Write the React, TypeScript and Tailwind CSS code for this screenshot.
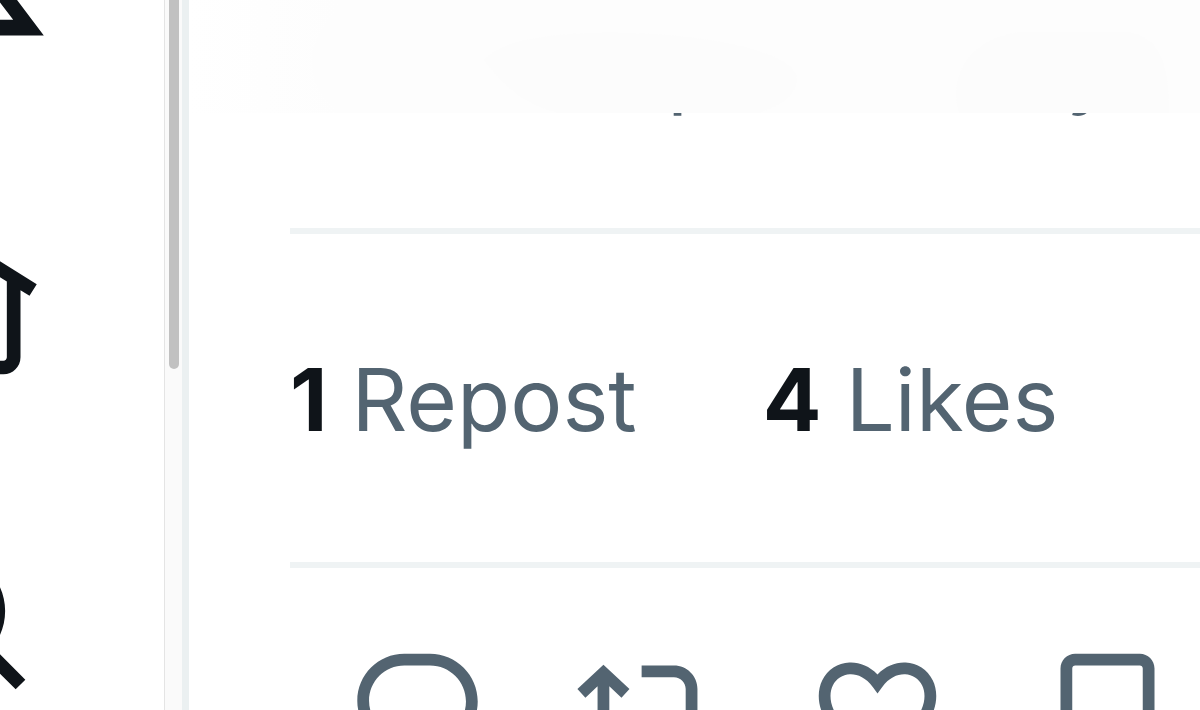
import type { ReactNode } from "react";

const NAV = [
  {
    id: "logo",
    label: "X",
    size: "size-[188px]",
    spacing: "mb-[171px]",
    path: "M18.244 2.25h3.308l-7.227 8.26 8.502 11.24H16.17l-5.214-6.817L4.99 21.75H1.68l7.73-8.835L1.254 2.25H8.08l4.713 6.231zm-1.161 17.52h1.833L7.084 4.126H5.117z",
  },
  {
    id: "home",
    label: "Home",
    size: "size-[164px]",
    spacing: "mb-[153px]",
    path: "M12 1.696L.622 8.807l1.06 1.696L3 9.679V19.5C3 20.881 4.119 22 5.5 22h13c1.381 0 2.5-1.119 2.5-2.5V9.679l1.318.824 1.06-1.696L12 1.696zM19 8.429V19.5c0 .276-.224.5-.5.5h-13c-.276 0-.5-.224-.5-.5V8.429l7-4.375 7 4.375z",
  },
  {
    id: "explore",
    label: "Explore",
    size: "size-[164px]",
    spacing: "",
    path: "M10.25 3.75c-3.59 0-6.5 2.91-6.5 6.5s2.91 6.5 6.5 6.5c1.795 0 3.419-.726 4.596-1.904 1.178-1.177 1.904-2.801 1.904-4.596 0-3.59-2.91-6.5-6.5-6.5zm-8.5 6.5c0-4.694 3.806-8.5 8.5-8.5s8.5 3.806 8.5 8.5c0 1.986-.682 3.815-1.824 5.262l4.781 4.781-1.414 1.414-4.781-4.781c-1.447 1.142-3.276 1.824-5.262 1.824-4.694 0-8.5-3.806-8.5-8.5z",
  },
];

const STATS = [
  { count: 1, label: "Repost" },
  { count: 4, label: "Likes" },
];

const ACTIONS = [
  {
    label: "Reply",
    path: "M1.751 10c0-4.42 3.584-8 8.005-8h4.366c4.49 0 8.129 3.64 8.129 8.13 0 2.96-1.607 5.68-4.196 7.11l-8.054 4.46v-3.69h-.067c-4.49.1-8.183-3.51-8.183-8.01zm8.005-6c-3.317 0-6.005 2.69-6.005 6 0 3.37 2.77 6.08 6.138 6.01l.351-.01h1.761v2.3l5.087-2.81c1.951-1.08 3.163-3.13 3.163-5.36 0-3.39-2.744-6.13-6.129-6.13H9.756z",
  },
  {
    label: "Repost",
    path: "M4.5 3.88l4.432 4.14-1.364 1.46L5.5 7.55V16c0 1.1.896 2 2 2H13v2H7.5c-2.209 0-4-1.79-4-4V7.55L1.432 9.48.068 8.02 4.5 3.88zM16.5 6H11V4h5.5c2.209 0 4 1.79 4 4v8.45l2.068-1.93 1.364 1.46-4.432 4.14-4.432-4.14 1.364-1.46 2.068 1.93V8c0-1.1-.896-2-2-2z",
  },
  {
    label: "Like",
    path: "M16.697 5.5c-1.222-.06-2.679.51-3.89 2.16l-.805 1.09-.806-1.09C9.984 6.01 8.526 5.44 7.304 5.5c-1.243.07-2.349.78-2.91 1.91-.552 1.12-.633 2.78.479 4.82 1.074 1.97 3.257 4.27 7.129 6.61 3.87-2.34 6.052-4.64 7.126-6.61 1.111-2.04 1.03-3.7.477-4.82-.561-1.13-1.666-1.84-2.908-1.91zm4.187 7.69c-1.351 2.48-4.001 5.12-8.379 7.67l-.503.3-.504-.3c-4.379-2.55-7.029-5.19-8.382-7.67-1.36-2.5-1.41-4.86-.514-6.67.887-1.79 2.647-2.91 4.601-3.01 1.651-.09 3.368.56 4.798 2.01 1.429-1.45 3.146-2.1 4.796-2.01 1.954.1 3.714 1.22 4.601 3.01.896 1.81.846 4.17-.514 6.67z",
  },
  {
    label: "Bookmark",
    path: "M4 4.5C4 3.12 5.119 2 6.5 2h11C18.881 2 20 3.12 20 4.5v18.44l-8-5.71-8 5.71V4.5zM6.5 4c-.276 0-.5.22-.5.5v14.56l6-4.29 6 4.29V4.5c0-.28-.224-.5-.5-.5h-11z",
  },
];

function Icon({ path }: { path: string }) {
  return (
    <svg viewBox="0 0 24 24" className="size-full" fill="currentColor" aria-hidden>
      <path d={path} />
    </svg>
  );
}

function SideNav() {
  return (
    <div className="w-[164px] shrink-0 overflow-hidden">
      <nav className="-mt-[135px] -ml-[135px] flex w-[188px] flex-col items-center text-[#0f1419]">
        {NAV.map((item) => (
          <a
            key={item.id}
            href={`#${item.id}`}
            aria-label={item.label}
            className={`block shrink-0 ${item.size} ${item.spacing}`}
          >
            <Icon path={item.path} />
          </a>
        ))}
      </nav>
    </div>
  );
}

function ScrollTrack() {
  return (
    <div className="w-[18px] shrink-0 border-l border-[#e4e4e4] bg-[#fafafa] px-1" aria-hidden>
      <div className="h-[52%] w-[10px] rounded-b-full bg-[#c1c1c1]" />
    </div>
  );
}

function TopBar() {
  return (
    <header className="absolute inset-x-0 top-0 h-[113px] overflow-hidden bg-linear-to-r from-white to-[#fdfdfd] to-15%">
      <svg
        viewBox="0 0 1011 113"
        preserveAspectRatio="none"
        className="size-full"
        fill="#fcfcfc"
        aria-hidden
      >
        <path d="M150 113C110 80 115 35 160 0H480L300 60L370 113z" fill="#fdfdfd" />
        <path d="M295 60C320 30 420 30 490 36C560 44 608 58 608 80C606 98 590 106 570 113H370C330 104 310 80 295 60z" />
        <path d="M770 113C760 80 775 40 830 32H940C970 38 980 60 980 113z" />
      </svg>
    </header>
  );
}

function Rule() {
  return <hr className="h-[6px] border-0 bg-[#eff3f4]" />;
}

function Row({ className, children }: { className: string; children: ReactNode }) {
  return <div className={`flex ${className}`}>{children}</div>;
}

export default function App() {
  return (
    <div className="flex h-screen overflow-hidden bg-white font-[Inter,sans-serif] text-[87px] leading-[112px] text-[#536471]">
      <SideNav />
      <ScrollTrack />
      <main className="relative min-w-0 flex-1 overflow-hidden border-l-[7px] border-[#ebf0f1]">
        <article className="pt-[11px] pl-[101px]">
          <Row className="gap-[346px] pb-[105px] pl-[377px]">
            <span>p</span>
            <span>y</span>
          </Row>
          <Rule />
          <Row className="gap-[126px] pt-[110px] pb-[106px]">
            {STATS.map((s) => (
              <a key={s.label} href={`#${s.label}`} className="flex items-baseline gap-6">
                <span className="font-bold text-[#0f1419]">{s.count}</span>
                <span>{s.label}</span>
              </a>
            ))}
          </Row>
          <Rule />
          <Row className="gap-[89px] pt-[74px] pl-[57px]">
            {ACTIONS.map((a) => (
              <button key={a.label} type="button" aria-label={a.label} className="size-[141px] shrink-0">
                <Icon path={a.path} />
              </button>
            ))}
          </Row>
        </article>
        <TopBar />
      </main>
    </div>
  );
}
